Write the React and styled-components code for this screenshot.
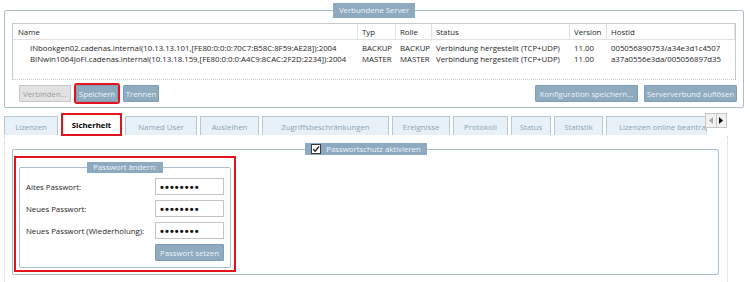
import React from "react";
import styled, { createGlobalStyle } from "styled-components";

const GlobalStyle = createGlobalStyle`
  html, body {
    margin: 0;
    padding: 0;
    background: #fff;
  }
  body {
    font-family: "Open Sans", "Liberation Sans", sans-serif;
    font-size: 7.8px;
    color: #222;
  }
  * {
    box-sizing: border-box;
  }
`;

const Page = styled.div`
  width: 750px;
  height: 282px;
  overflow: hidden;
  padding: 3px 6px 0 4px;
`;

const Group = styled.fieldset`
  margin: 0;
  min-width: 0;
  border: 1px solid #a8bdce;
  border-radius: 2px;
  padding: ${({ $pad }) => $pad || "5px 7px 5px 7px"};
`;

const Legend = styled.legend`
  margin: 0 auto;
  padding: 0 6px;
  height: ${({ $h }) => $h || 15}px;
  line-height: ${({ $h }) => $h || 15}px;
  background: #8eaac0;
  color: #eef4f8;
  display: flex;
  align-items: center;
  gap: 5px;
`;

const ServerTable = styled.div`
  height: 57px;
  border: 1px solid #c9c9c9;
  border-bottom-style: dotted;
`;

const TableRow = styled.div`
  display: grid;
  grid-template-columns: 345px 38px 36px 138px 37px 1fr;
  height: ${({ $head }) => ($head ? "16px" : "10.5px")};
  line-height: ${({ $head }) => ($head ? "16px" : "10.5px")};
  border-bottom: ${({ $head }) => ($head ? "1px solid #e2e2e2" : "none")};
  margin-bottom: ${({ $head }) => ($head ? "3px" : "0")};
  color: #1e1e1e;
`;

const Cell = styled.div`
  padding-left: ${({ $indent }) => ($indent ? "17px" : "4px")};
  white-space: nowrap;
  overflow: hidden;
  border-right: ${({ $sep }) => ($sep ? "1px solid #e4e4e4" : "none")};
`;

const ButtonBar = styled.div`
  display: flex;
  justify-content: space-between;
  margin-top: 5px;
  padding-left: 7px;
  margin-right: -1px;
`;

const ButtonGroup = styled.div`
  display: flex;
  gap: ${({ $gap }) => $gap || 5}px;
`;

const Button = styled.button`
  height: 17px;
  width: ${({ $w }) => $w}px;
  padding: 0;
  font: inherit;
  border-radius: 1px;
  border: 1px solid ${({ disabled }) => (disabled ? "#c6c6c6" : "#7f9db3")};
  background: ${({ disabled }) => (disabled ? "#e2e2e2" : "#8eabc0")};
  color: ${({ disabled }) => (disabled ? "#9c9c9c" : "#eef4f8")};
  outline: ${({ $marked }) => ($marked ? "2px solid #e3141b" : "none")};
  outline-offset: 0;
  white-space: nowrap;
`;

const TabStrip = styled.div`
  display: flex;
  margin-top: 5px;
  height: 23px;
`;

const TabList = styled.div`
  width: 703px;
  overflow: hidden;
  display: flex;
  align-items: flex-end;
  gap: 3px;
`;

const Tab = styled.div`
  flex-shrink: 0;
  width: ${({ $w }) => $w}px;
  height: ${({ $active }) => ($active ? "23px" : "19px")};
  margin-bottom: ${({ $active }) => ($active ? "0" : "1px")};
  display: flex;
  align-items: center;
  justify-content: center;
  white-space: nowrap;
  overflow: hidden;
  border: ${({ $active }) => ($active ? "2px solid #e3141b" : "1px solid #b6c8d6")};
  border-bottom-width: ${({ $active }) => ($active ? "2px" : "0")};
  background: ${({ $active }) => ($active ? "#fff" : "#e8f1f8")};
  color: ${({ $active }) => ($active ? "#000" : "#8da3b3")};
  font-weight: ${({ $active }) => ($active ? 700 : 400)};
  padding-top: ${({ $active }) => ($active ? "0" : "1px")};
`;

const ScrollArrows = styled.div`
  width: 22px;
  height: 15px;
  margin-left: -2px;
  display: flex;
  border: 1px solid #c7c7c7;
  background: #f1f1f1;
`;

const ArrowHalf = styled.div`
  flex: 1;
  display: flex;
  align-items: center;
  justify-content: center;
  & + & {
    border-left: 1px solid #c7c7c7;
  }
`;

const TabPanel = styled.div`
  width: 724px;
  height: 146px;
  border-left: 1px dotted #d6d6d6;
  border-right: 1px dotted #d6d6d6;
  padding: 7px 8px 0 7px;
`;

const CheckBox = styled.span`
  width: 10px;
  height: 10px;
  border: 1px solid #3a3a3a;
  background: #fff;
  display: flex;
  align-items: center;
  justify-content: center;
`;

const Marked = styled.div`
  width: 222px;
  border: 2px solid #e3141b;
  padding: 4px 3px 2px 3px;
`;

const FormGrid = styled.div`
  display: grid;
  grid-template-columns: 1fr 69px;
  grid-auto-rows: 17px;
  row-gap: 5px;
  align-items: center;
`;

const Label = styled.div`
  color: #1e1e1e;
`;

const PasswordField = styled.div`
  height: 17px;
  border: 1px solid #c4c4c4;
  background: #fff;
  padding-left: 4px;
  display: flex;
  align-items: center;
  font-family: "Liberation Sans", sans-serif;
  font-size: 11px;
  font-weight: 700;
  letter-spacing: 1.1px;
  color: #111;
`;

const servers = [
  {
    name: "INbookgen02.cadenas.internal(10.13.13.101,[FE80:0:0:0:70C7:B58C:8F59:AE28]):2004",
    typ: "BACKUP",
    rolle: "BACKUP",
    status: "Verbindung hergestellt (TCP+UDP)",
    version: "11.00",
    hostid: "005056890753/a34e3d1c4507",
  },
  {
    name: "BINwin1064JoFI.cadenas.internal(10.13.18.159,[FE80:0:0:0:A4C9:8CAC:2F2D:2234]):2004",
    typ: "MASTER",
    rolle: "MASTER",
    status: "Verbindung hergestellt (TCP+UDP)",
    version: "11.00",
    hostid: "a37a0556e3da/005056897d35",
  },
];

const tabs = [
  { label: "Lizenzen", w: 54 },
  { label: "Sicherheit", w: 61, active: true },
  { label: "Named User", w: 72 },
  { label: "Ausleihen", w: 59 },
  { label: "Zugriffsbeschränkungen", w: 127 },
  { label: "Ereignisse", w: 58 },
  { label: "Protokoll", w: 55 },
  { label: "Status", w: 40 },
  { label: "Statistik", w: 49 },
  { label: "Lizenzen online beantragen", w: 126 },
];

const passwordRows = [
  "Altes Passwort:",
  "Neues Passwort:",
  "Neues Passwort (Wiederholung):",
];

const App = () => {
  return (
    <Page>
      <GlobalStyle />
      <Group>
        <Legend>Verbundene Server</Legend>
        <ServerTable>
          <TableRow $head>
            <Cell $sep style={{ paddingLeft: 5 }}>Name</Cell>
            <Cell $sep>Typ</Cell>
            <Cell $sep>Rolle</Cell>
            <Cell $sep>Status</Cell>
            <Cell $sep>Version</Cell>
            <Cell $sep>Hostid</Cell>
          </TableRow>
          {servers.map((s) => (
            <TableRow key={s.name}>
              <Cell $indent>{s.name}</Cell>
              <Cell>{s.typ}</Cell>
              <Cell>{s.rolle}</Cell>
              <Cell>{s.status}</Cell>
              <Cell>{s.version}</Cell>
              <Cell>{s.hostid}</Cell>
            </TableRow>
          ))}
        </ServerTable>
        <ButtonBar>
          <ButtonGroup>
            <Button $w={52} disabled>
              Verbinden...
            </Button>
            <Button $w={42} $marked>
              Speichern
            </Button>
            <Button $w={36}>Trennen</Button>
          </ButtonGroup>
          <ButtonGroup $gap={6}>
            <Button $w={103}>Konfiguration speichern...</Button>
            <Button $w={93}>Serververbund auflösen</Button>
          </ButtonGroup>
        </ButtonBar>
      </Group>

      <TabStrip>
        <TabList>
          {tabs.map((t) => (
            <Tab key={t.label} $w={t.w} $active={t.active}>
              {t.label}
            </Tab>
          ))}
        </TabList>
        <ScrollArrows>
          <ArrowHalf>
            <svg width="4" height="7" viewBox="0 0 4 7">
              <path d="M4 0 L0 3.5 L4 7 Z" fill="#a9a9a9" />
            </svg>
          </ArrowHalf>
          <ArrowHalf>
            <svg width="4" height="7" viewBox="0 0 4 7">
              <path d="M0 0 L4 3.5 L0 7 Z" fill="#111" />
            </svg>
          </ArrowHalf>
        </ScrollArrows>
      </TabStrip>

      <TabPanel>
        <Group $pad="1px 0 0 1px" style={{ height: 132 }}>
          <Legend $h={12}>
            <CheckBox>
              <svg width="8" height="8" viewBox="0 0 8 8">
                <path d="M1.2 4.2 L3.2 6.2 L7 1.5" stroke="#222" strokeWidth="1.3" fill="none" />
              </svg>
            </CheckBox>
            Passwortschutz aktivieren
          </Legend>
          <Marked>
            <Group $pad="5px 6px 6px 6px">
              <Legend $h={11}>Passwort ändern:</Legend>
              <FormGrid>
                {passwordRows.map((label) => (
                  <React.Fragment key={label}>
                    <Label>{label}</Label>
                    <PasswordField>••••••••</PasswordField>
                  </React.Fragment>
                ))}
                <span />
                <Button $w={69}>Passwort setzen</Button>
              </FormGrid>
            </Group>
          </Marked>
        </Group>
      </TabPanel>
    </Page>
  );
};

export default App;
